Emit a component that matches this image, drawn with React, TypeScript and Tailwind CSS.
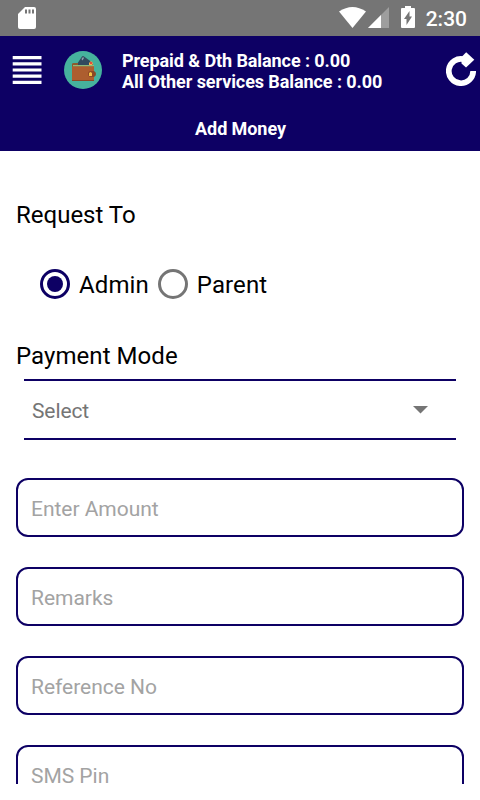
import clsx from 'clsx';

const fields = ['Enter Amount', 'Remarks', 'Reference No', 'SMS Pin'];

function StatusBar() {
  return (
    <div className="flex h-9 shrink-0 items-center bg-[#757575] text-white">
      <svg className="ml-[18px] h-[22px] w-[18px]" viewBox="0 0 18 22">
        <path d="M7 0H16Q18 0 18 2V20Q18 22 16 22H2Q0 22 0 20V7Z" fill="#fff" />
        <path d="M7 2.5h2v4H7zM10.5 2.5h2v4h-2zM14 2.5h2v4h-2z" fill="#757575" />
      </svg>
      <div className="ml-auto flex items-center">
        <svg className="-mt-px h-[21px] w-[27px]" viewBox="0 0 27 21">
          <path d="M0 4.5Q13.5-4.5 27 4.5L13.5 21Z" fill="#fff" />
        </svg>
        <svg className="-mt-px ml-[2px] h-[21px] w-[21px]" viewBox="0 0 21 21">
          <path d="M21 0V21H0Z" fill="#fff" fillOpacity=".3" />
          <path d="M13 8V21H0Z" fill="#fff" />
        </svg>
        <svg className="-mt-[2px] ml-[12px] h-[22px] w-[14px]" viewBox="0 0 14 22">
          <path d="M4 0H10V2H13Q14 2 14 3V21Q14 22 13 22H1Q0 22 0 21V3Q0 2 1 2H4Z" fill="#fff" />
          <path d="M8.500 5V10.500H11L5.500 19V13H3Z" fill="#757575" />
        </svg>
        <span className="mr-[13px] ml-[11px] pt-[2px] text-[21px] leading-[34px] font-medium">2:30</span>
      </div>
    </div>
  );
}

function WalletIcon() {
  return (
    <svg className="h-[38px] w-[38px]" viewBox="0 0 38 38">
      <circle cx="19" cy="19" r="19" fill="#46b29d" />
      <path d="M13 13L18 5.5Q19 4.5 20 5.5L29 12V16H13Z" fill="#324a5e" />
      <path d="M17.500 8l1.500-2 1 1-1.500 2.500z" fill="#90a3b0" />
      <path d="M25 12l2-2 2 2-1 3h-3z" fill="#f9b54c" />
      <path d="M26 11h2v2h-2z" fill="#e74c3c" />
      <path d="M8 13q0-1 2-1h4v2h16v3H8z" fill="#8c5a2c" />
      <path d="M9 14h21v1.5H9z" fill="#8fba7c" />
      <path d="M8 15.5H30V30H9Q8 30 8 29Z" fill="#ad5e2f" />
      <path d="M8 29h22v1H8z" fill="#8c4825" />
      <path d="M24 23q0-3 3-3h3q2 1 2 3t-2 3h-3q-3 0-3-3z" fill="#8c4825" />
      <path d="M25 22l1.500-1 1.500 1v3h-3z" fill="#f4c245" />
    </svg>
  );
}

function Header() {
  return (
    <div className="h-[115px] shrink-0 bg-[#0d0064] text-white">
      <div className="flex h-[70px] items-center">
        <svg className="-mt-[2px] ml-3 h-[30px] w-[30px]" viewBox="0 0 30 30">
          <path
            d="M.7 1H29.500V4.200H.7ZM.7 7.200H29.500V10.400H.7ZM.7 13.400H29.500V16.600H.7ZM.7 19.600H29.500V22.800H.7ZM.7 25.800H29.500V29H.7Z"
            fill="#fff"
          />
        </svg>
        <div className="-mt-[2px] ml-[22px]">
          <WalletIcon />
        </div>
        <div className="ml-5 text-[18px] leading-[21px] font-bold tracking-[-0.08px] whitespace-nowrap">
          <p>Prepaid &amp; Dth Balance : 0.00</p>
          <p>All Other services Balance : 0.00</p>
        </div>
        <svg className="-mt-[3px] mr-[4px] ml-auto h-[35px] w-[30px]" viewBox="0 0 30 35">
          <path d="M18 7.200A12.200 12.200 0 1 0 27.200 19" fill="none" stroke="#fff" strokeWidth="5.7" />
          <path d="M20.200 .3L28.300 7.700L20 15.500L15.500 11.500V5Z" fill="#fff" />
        </svg>
      </div>
      <p className="pt-3 pl-px text-center text-[18px] leading-[21px] font-bold tracking-[-0.08px]">Add Money</p>
    </div>
  );
}

function Radio({ label, checked }: { label: string; checked?: boolean }) {
  return (
    <div className="flex items-center gap-[9px]">
      <div
        className={clsx(
          'flex h-[30px] w-[30px] items-center justify-center rounded-full border-3',
          checked ? 'border-[#0d0064]' : 'border-[#757575]'
        )}
      >
        {checked && <div className="h-4 w-4 rounded-full bg-[#0d0064]" />}
      </div>
      <span className="pt-[2px] text-[24px] leading-7 tracking-[0.1px]">{label}</span>
    </div>
  );
}

export default function App() {
  return (
    <div className="flex h-[800px] w-[480px] flex-col overflow-hidden bg-white font-['Roboto',sans-serif] text-black">
      <StatusBar />
      <Header />
      <div className="mb-4 min-h-0 flex-1 overflow-hidden px-4 pt-[50px]">
        <p className="text-[24px] leading-7">Request To</p>
        <div className="mt-10 ml-6 flex gap-[9px]">
          <Radio label="Admin" checked />
          <Radio label="Parent" />
        </div>
        <p className="mt-[43px] text-[24px] leading-7 tracking-[0.06px]">Payment Mode</p>
        <div className="mx-2 mt-[9px] flex h-[61px] items-center justify-between border-y-2 border-[#0d0064] pr-[28px] pl-2">
          <span className="pt-1 text-[21px] tracking-[-0.1px] text-[#757575]">Select</span>
          <svg className="h-[8px] w-[15px]" viewBox="0 0 15 8">
            <path d="M0 0H15L7.5 7.5Z" fill="#757575" />
          </svg>
        </div>
        <div className="mt-[38px] flex flex-col gap-[30px]">
          {fields.map((field) => (
            <div
              key={field}
              className="flex h-[59px] shrink-0 items-center rounded-xl border-2 border-[#0d0064] px-[13px] pt-1 text-[21px] tracking-[-0.03px] text-[#a3a3a3]"
            >
              {field}
            </div>
          ))}
        </div>
      </div>
    </div>
  );
}
